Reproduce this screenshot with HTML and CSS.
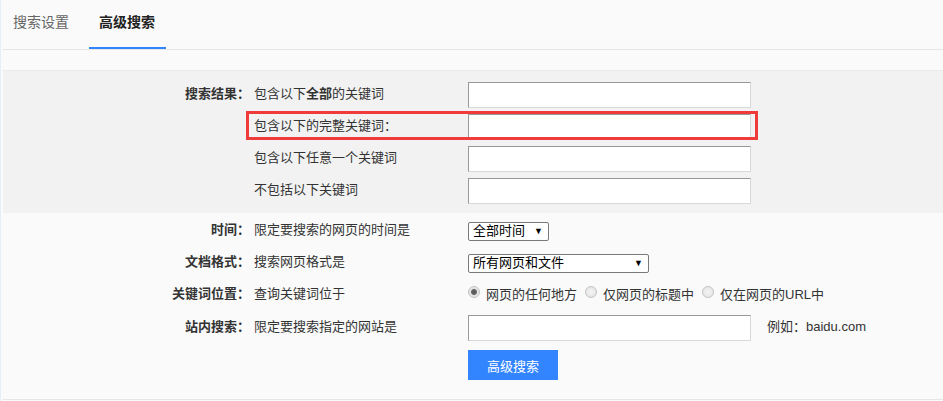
FILE: index.html
```html
<!DOCTYPE html>
<html lang="zh-CN">
<head>
    <meta charset="UTF-8">
    <title>高级搜索</title>
    <link rel="stylesheet" href="styles.css">
</head>
<body>
    <div class="page">
        <ul class="tabs">
            <li class="tab">搜索设置</li>
            <li class="tab active">高级搜索</li>
        </ul>

        <form class="adv-form">
            <!-- keyword options -->
            <div class="group group-gray">
                <div class="row">
                    <label class="name">搜索结果：</label>
                    <span class="desc">包含以下<b>全部</b>的关键词</span>
                    <div class="field"><input type="text" class="text-input"></div>
                </div>
                <div class="row row-mark">
                    <span class="name"></span>
                    <span class="desc">包含以下的完整关键词：</span>
                    <div class="field"><input type="text" class="text-input"></div>
                    <span class="mark-box"></span>
                </div>
                <div class="row">
                    <span class="name"></span>
                    <span class="desc">包含以下任意一个关键词</span>
                    <div class="field"><input type="text" class="text-input"></div>
                </div>
                <div class="row">
                    <span class="name"></span>
                    <span class="desc">不包括以下关键词</span>
                    <div class="field"><input type="text" class="text-input"></div>
                </div>
            </div>

            <!-- other filters -->
            <div class="group group-light">
                <div class="row">
                    <label class="name">时间：</label>
                    <span class="desc">限定要搜索的网页的时间是</span>
                    <div class="field">
                        <span class="select-wrap sel-time">
                            <select><option>全部时间</option></select>
                        </span>
                    </div>
                </div>
                <div class="row">
                    <label class="name">文档格式：</label>
                    <span class="desc">搜索网页格式是</span>
                    <div class="field">
                        <span class="select-wrap sel-type">
                            <select><option>所有网页和文件</option></select>
                        </span>
                    </div>
                </div>
                <div class="row">
                    <label class="name">关键词位置：</label>
                    <span class="desc">查询关键词位于</span>
                    <div class="field radios">
                        <label class="radio"><input type="radio" name="pos" checked>网页的任何地方</label>
                        <label class="radio"><input type="radio" name="pos">仅网页的标题中</label>
                        <label class="radio"><input type="radio" name="pos">仅在网页的URL中</label>
                    </div>
                </div>
                <div class="row row-site">
                    <label class="name">站内搜索：</label>
                    <span class="desc">限定要搜索指定的网站是</span>
                    <div class="field">
                        <input type="text" class="text-input">
                        <span class="hint">例如：baidu.com</span>
                    </div>
                </div>
                <div class="row row-submit">
                    <div class="field"><button type="button" class="btn-search">高级搜索</button></div>
                </div>
            </div>
        </form>
    </div>
</body>
</html>
```

FILE: styles.css
```css
body {
    margin: 0;
    background-color: #fafafa;
    font-family: "Liberation Sans", "Noto Sans CJK SC", sans-serif;
    font-size: 13px;
    color: #333;
}

.page {
    border-left: 1px solid #e6eef9;
    padding-left: 2px;
    min-height: 401px;
    box-sizing: border-box;
}

/* tabs */
.tabs {
    display: flex;
    gap: 10px;
    margin: 0;
    padding: 0;
    list-style: none;
    height: 49px;
    border-bottom: 1px solid #e6e6e6;
}

.tab {
    height: 47px;
    line-height: 44px;
    padding: 0 10px;
    font-size: 14px;
    color: #666;
    border-bottom: 2px solid transparent;
}

.tab.active {
    padding: 0 11px 0 10px;
    color: #222;
    font-weight: bold;
    border-bottom-color: #3385ff;
}

/* form */
.adv-form {
    margin-top: 20px;
}

.group-gray {
    background-color: #f2f2f2;
    border-top: 1px solid #ebebeb;
    padding: 8px 0 6px;
}

.group-light {
    padding: 2px 0 19px;
    border-bottom: 1px solid #e6e6e6;
}

.row {
    display: grid;
    grid-template-columns: 247px 210px 1fr;
    column-gap: 4px;
    align-items: center;
    height: 32px;
    position: relative;
}

.row-site {
    height: 34px;
}

.row-submit {
    height: 30px;
    margin-top: 5px;
}

.row-submit .field {
    grid-column: 3;
}

/* text sits a little above the field centre line */
.name,
.desc {
    margin-bottom: 6px;
}

.name {
    text-align: right;
    font-weight: bold;
    color: #333;
}

.desc {
    white-space: nowrap;
}

.field {
    display: flex;
    align-items: center;
}

.text-input {
    width: 283px;
    height: 26px;
    box-sizing: border-box;
    margin: 0;
    padding: 0 4px;
    background: #fff;
    border: 1px solid #d8d8d8;
    border-top-color: #999;
    border-left-color: #999;
    outline: none;
}

/* highlighted row frame */
.mark-box {
    position: absolute;
    left: 243px;
    top: 0;
    width: 512px;
    height: 29px;
    box-sizing: border-box;
    border: 3px solid #f03b3b;
    pointer-events: none;
}

/* selects */
.select-wrap {
    position: relative;
    display: inline-block;
}

.select-wrap select {
    -webkit-appearance: none;
    appearance: none;
    height: 19px;
    margin: 0;
    padding: 0 0 2px 4px;
    font-family: inherit;
    font-size: 13px;
    line-height: 15px;
    color: #000;
    background: #fff;
    border: 1px solid #7a7a7a;
    border-radius: 2px;
    outline: none;
}

.sel-time select {
    width: 81px;
}

.sel-type select {
    width: 181px;
}

.select-wrap::after {
    content: "\25BC";
    position: absolute;
    right: 6px;
    top: 4px;
    font-size: 9px;
    line-height: 11px;
    color: #000;
    pointer-events: none;
}

/* radios */
.radios {
    gap: 8px;
    margin-bottom: 4px;
}

.radio {
    display: flex;
    align-items: center;
    white-space: nowrap;
}

.radio input {
    -webkit-appearance: none;
    appearance: none;
    width: 12px;
    height: 12px;
    margin: 0 6px 2px 0;
    border: 1px solid #c2c2c2;
    border-radius: 50%;
    background: radial-gradient(circle, #f4f4f4 0, #e2e2e2 100%);
}

.radio input:checked {
    background: radial-gradient(circle, #555 0, #666 2.5px, #e4e4e4 3.5px, #e8e8e8 100%);
}

.hint {
    margin: 0 0 6px 16px;
    color: #333;
}

.btn-search {
    width: 90px;
    height: 30px;
    border: none;
    background-color: #3385ff;
    color: #fff;
    font-family: inherit;
    font-size: 13px;
    cursor: pointer;
}
```
